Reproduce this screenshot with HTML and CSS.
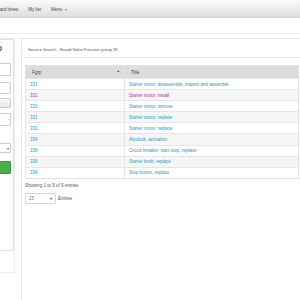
FILE: index.html
```html
<!DOCTYPE html>
<html lang="en">
  <head>
    <meta charset="UTF-8" />
    <title>Service Search</title>
    <link rel="stylesheet" href="styles.css">
  </head>
  <body>
    <nav class="navbar">
      <a href="#">Standard times</a>
      <a href="#">My list</a>
      <a href="#">Menu <span class="caret">▾</span></a>
    </nav>
    <div class="subbar"></div>

    <div class="layout">
      <aside class="side-wrap">
        <div class="side-card">
          <div class="side-title">ID</div>
          <input class="field f1" type="text" />
          <input class="field f2" type="text" />
          <button class="btn-grey" aria-label="Clear"></button>
          <div class="field with-icon"><span>‹</span></div>
          <div class="field select"><span>▾</span></div>
          <button class="btn-green" aria-label="Search"></button>
        </div>
      </aside>

      <main class="panel">
        <div class="panel-heading">Service Search - Brand Volvo Function group 33</div>
        <table class="results">
          <thead>
            <tr>
              <th class="col-fgrp">Fgrp <span class="sort">▲</span></th>
              <th>Title</th>
            </tr>
          </thead>
          <tbody>
            <tr><td><a href="#">331</a></td><td><a href="#">Starter motor, disassemble, inspect and assemble</a></td></tr>
            <tr><td><a class="visited" href="#">331</a></td><td><a class="visited" href="#">Starter motor, install</a></td></tr>
            <tr><td><a href="#">331</a></td><td><a href="#">Starter motor, remove</a></td></tr>
            <tr><td><a href="#">331</a></td><td><a href="#">Starter motor, replace</a></td></tr>
            <tr><td><a href="#">331</a></td><td><a href="#">Starter motor, replace</a></td></tr>
            <tr><td><a href="#">334</a></td><td><a href="#">Alcolock, activation</a></td></tr>
            <tr><td><a href="#">336</a></td><td><a href="#">Circuit breaker, start-stop, replace</a></td></tr>
            <tr><td><a href="#">336</a></td><td><a href="#">Starter knob, replace</a></td></tr>
            <tr><td><a href="#">334</a></td><td><a href="#">Stop button, replace</a></td></tr>
          </tbody>
        </table>
        <div class="info">Showing 1 to 9 of 9 entries</div>
        <div class="length">
          <div class="length-select">25 <span>▾</span></div>
          Entries
        </div>
      </main>
    </div>
  </body>
</html>
```

FILE: styles.css
```css
body {
  margin: 0;
  font-family: "Liberation Sans", Arial, sans-serif;
  font-size: 4.5px;
  color: #333;
  background-color: #fff;
  overflow: hidden;
  height: 300px;
}

a {
  color: #2f96ae;
  text-decoration: none;
}

a.visited {
  color: #a3359d;
}

.navbar {
  height: 16px;
  display: flex;
  align-items: center;
  gap: 10px;
  margin-left: -12px;
  padding-top: 1px;
  background: linear-gradient(#fbfbfb, #dedede);
  border-bottom: 1px solid #d8d8d8;
}

.navbar a {
  color: #444;
}

.caret {
  font-size: 4px;
  color: #777;
  margin-left: 1px;
}

.subbar {
  height: 15px;
  border-bottom: 1px solid #ececec;
}

.layout {
  display: flex;
  align-items: flex-start;
  gap: 6px;
  margin-top: 4px;
}

.side-wrap {
  width: 62px;
  margin-left: -48px;
  height: 233px;
  border: 1px solid #ececec;
  border-left: none;
}

.side-card {
  box-sizing: border-box;
  height: 212px;
  border: 1px solid #e2e2e2;
  border-left: none;
  padding: 5px 2px 0 0;
  display: flex;
  flex-direction: column;
  align-items: stretch;
}

.side-title {
  font-size: 6.5px;
  font-weight: bold;
  text-align: right;
  padding-right: 9px;
  color: #333;
  height: 18px;
}

.field {
  box-sizing: border-box;
  height: 13px;
  margin: 0;
  border: 1px solid #ccc;
  border-radius: 1px;
  background-color: #fff;
  padding: 0;
  font-size: 4px;
}

.f2 {
  height: 12px;
  margin-top: 6px;
}

.btn-grey {
  box-sizing: border-box;
  height: 10px;
  margin-top: 4px;
  border: 1px solid #ccc;
  border-radius: 1px;
  background: linear-gradient(#fafafa, #e6e6e6);
}

.with-icon {
  display: flex;
  justify-content: flex-end;
  align-items: center;
  padding-right: 1px;
  color: #888;
  margin-top: 5px;
}

.select {
  height: 10px;
  display: flex;
  justify-content: flex-end;
  align-items: center;
  padding-right: 1px;
  color: #555;
  margin-top: 17px;
}

.btn-green {
  box-sizing: border-box;
  height: 13px;
  margin-top: 8px;
  border: 1px solid #3e9a3e;
  border-radius: 1px;
  background-color: #4cae4c;
}

.panel {
  flex: 1;
  height: 270px;
  border: 1px solid #e6e6e6;
  border-right: none;
  padding: 0 0 0 3px;
}

.panel-heading {
  height: 16px;
  padding: 2px 0 0 6px;
  margin-left: -3px;
  display: flex;
  align-items: center;
  font-size: 4.2px;
  color: #555;
  border-bottom: 1px solid #e8e8e8;
}

.results {
  margin-top: 7px;
  width: 274px;
  border-collapse: collapse;
  border: 1px solid #e2e2e2;
}

.results th {
  height: 12px;
  padding: 0 0 0 6px;
  text-align: left;
  font-weight: normal;
  color: #444;
  background-color: #dcdcdc;
  border-left: 1px solid #e4e4e4;
}

.results th.col-fgrp {
  width: 92px;
  position: relative;
}

.sort {
  position: absolute;
  right: 4px;
  top: 3px;
  font-size: 3.5px;
  color: #555;
}

.results td {
  height: 10.1px;
  padding: 0 0 0 4px;
  border-top: 1px solid #e6e6e6;
  border-left: 1px solid #e6e6e6;
}

.results tbody tr:nth-child(even) td {
  background-color: #f6f6f6;
}

.info {
  margin-top: 4px;
  color: #555;
}

.length {
  display: flex;
  align-items: center;
  gap: 2px;
  margin-top: 5px;
  color: #555;
}

.length-select {
  box-sizing: border-box;
  width: 31px;
  height: 11px;
  border: 1px solid #d6d6d6;
  border-radius: 1px;
  display: flex;
  align-items: center;
  justify-content: space-between;
  padding: 0 3px;
  color: #777;
}

.length-select span {
  font-size: 4px;
  color: #444;
}
```
